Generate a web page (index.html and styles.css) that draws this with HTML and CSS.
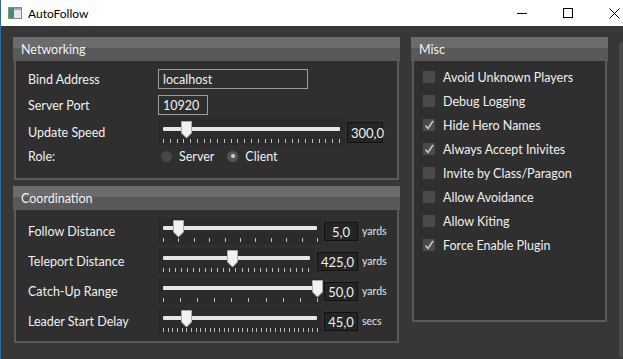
FILE: index.html
```html
<!DOCTYPE html>
<html lang="en">
<head>
    <meta charset="UTF-8">
    <title>AutoFollow</title>
    <link rel="stylesheet" href="styles.css">
</head>
<body>
<div class="window">
    <div class="titlebar">
        <svg class="app-icon" width="14" height="12" viewBox="0 0 14 12">
            <rect x="0.5" y="0.5" width="13" height="11" fill="#e8e8e8" stroke="#8a8a8a"/>
            <rect x="1" y="1" width="5" height="10" fill="#3f8f7a"/>
            <rect x="6" y="1" width="7" height="2" fill="#9aa7b3"/>
        </svg>
        <span class="title">AutoFollow</span>
        <div class="caption-buttons">
            <div class="cap-btn">
                <svg width="10" height="10" viewBox="0 0 10 10"><line x1="0" y1="5.5" x2="10" y2="5.5" stroke="#000" stroke-width="1"/></svg>
            </div>
            <div class="cap-btn">
                <svg width="10" height="10" viewBox="0 0 10 10"><rect x="0.5" y="0.5" width="9" height="9" fill="none" stroke="#000" stroke-width="1"/></svg>
            </div>
            <div class="cap-btn">
                <svg width="11" height="11" viewBox="0 0 11 11"><path d="M0.5 0.5 L10.5 10.5 M10.5 0.5 L0.5 10.5" stroke="#000" stroke-width="1"/></svg>
            </div>
        </div>
    </div>

    <div class="content">
        <div class="left-col">
            <section class="group">
                <div class="group-header">Networking</div>
                <div class="group-body net-body">
                    <div class="row row-input">
                        <label class="label">Bind Address</label>
                        <div class="text-input addr">localhost</div>
                    </div>
                    <div class="row row-input second">
                        <label class="label">Server Port</label>
                        <div class="text-input port">10920</div>
                    </div>
                    <div class="row row-slider">
                        <label class="label">Update Speed</label>
                        <div class="slider">
                            <div class="track"></div>
                            <div class="ticks" style="--step: 6.77px"></div>
                            <svg class="thumb" style="left: 23px" width="11" height="18" viewBox="0 0 11 18"><path d="M0.5 0.5 H10.5 V12 L5.5 17 L0.5 12 Z" fill="#f1f1f1" stroke="#a9a9a9"/></svg>
                        </div>
                        <div class="value big">300,0</div>
                    </div>
                    <div class="row row-role">
                        <label class="label">Role:</label>
                        <div class="radios">
                            <span class="radio"><span class="dot"></span>Server</span>
                            <span class="radio on"><span class="dot"></span>Client</span>
                        </div>
                    </div>
                </div>
            </section>

            <section class="group">
                <div class="group-header">Coordination</div>
                <div class="group-body coord-body">
                    <div class="row coord-row">
                        <label class="label">Follow Distance</label>
                        <div class="slider">
                            <div class="track"></div>
                            <div class="ticks" style="--step: 15.4px"></div>
                            <svg class="thumb" style="left: 15px" width="11" height="18" viewBox="0 0 11 18"><path d="M0.5 0.5 H10.5 V12 L5.5 17 L0.5 12 Z" fill="#f1f1f1" stroke="#a9a9a9"/></svg>
                        </div>
                        <div class="value">5,0</div>
                        <span class="unit">yards</span>
                    </div>
                    <div class="row coord-row">
                        <label class="label">Teleport Distance</label>
                        <div class="slider">
                            <div class="track"></div>
                            <div class="ticks" style="--step: 6.04px"></div>
                            <svg class="thumb" style="left: 69px" width="11" height="18" viewBox="0 0 11 18"><path d="M0.5 0.5 H10.5 V12 L5.5 17 L0.5 12 Z" fill="#f1f1f1" stroke="#a9a9a9"/></svg>
                        </div>
                        <div class="value">425,0</div>
                        <span class="unit">yards</span>
                    </div>
                    <div class="row coord-row">
                        <label class="label">Catch-Up Range</label>
                        <div class="slider">
                            <div class="track"></div>
                            <div class="ticks" style="--step: 17.1px"></div>
                            <svg class="thumb" style="left: 154px" width="11" height="18" viewBox="0 0 11 18"><path d="M0.5 0.5 H10.5 V12 L5.5 17 L0.5 12 Z" fill="#f1f1f1" stroke="#a9a9a9"/></svg>
                        </div>
                        <div class="value">50,0</div>
                        <span class="unit">yards</span>
                    </div>
                    <div class="row coord-row">
                        <label class="label">Leader Start Delay</label>
                        <div class="slider">
                            <div class="track"></div>
                            <div class="ticks" style="--step: 4.67px"></div>
                            <svg class="thumb" style="left: 23px" width="11" height="18" viewBox="0 0 11 18"><path d="M0.5 0.5 H10.5 V12 L5.5 17 L0.5 12 Z" fill="#f1f1f1" stroke="#a9a9a9"/></svg>
                        </div>
                        <div class="value">45,0</div>
                        <span class="unit">secs</span>
                    </div>
                </div>
            </section>
        </div>

        <section class="group misc">
            <div class="group-header">Misc</div>
            <div class="group-body misc-body">
                <div class="check"><span class="box"></span>Avoid Unknown Players</div>
                <div class="check"><span class="box"></span>Debug Logging</div>
                <div class="check"><span class="box"><svg width="12" height="12" viewBox="0 0 12 12"><path d="M2.5 6.5 L5 9.5 L10 2" fill="none" stroke="#c8c8c8" stroke-width="1.6"/></svg></span>Hide Hero Names</div>
                <div class="check"><span class="box"><svg width="12" height="12" viewBox="0 0 12 12"><path d="M2.5 6.5 L5 9.5 L10 2" fill="none" stroke="#c8c8c8" stroke-width="1.6"/></svg></span>Always Accept Inivites</div>
                <div class="check"><span class="box"></span>Invite by Class/Paragon</div>
                <div class="check"><span class="box"></span>Allow Avoidance</div>
                <div class="check"><span class="box"></span>Allow Kiting</div>
                <div class="check"><span class="box"><svg width="12" height="12" viewBox="0 0 12 12"><path d="M2.5 6.5 L5 9.5 L10 2" fill="none" stroke="#c8c8c8" stroke-width="1.6"/></svg></span>Force Enable Plugin</div>
            </div>
        </section>

        <div class="side-strip"></div>
    </div>
</div>
</body>
</html>
```

FILE: styles.css
```css
* {
    margin: 0;
    padding: 0;
    box-sizing: border-box;
}

body {
    width: 623px;
    height: 359px;
    overflow: hidden;
    background: #373737;
    color: #f0f0f0;
    font-family: 'Lato', 'Liberation Sans', sans-serif;
    font-size: 12.5px;
}

.window {
    height: 359px;
    border-left: 1px solid #2b6aa6;
    display: flex;
    flex-direction: column;
}

/* title bar */
.titlebar {
    height: 26px;
    flex: none;
    background: #fff;
    color: #000;
    display: flex;
    align-items: center;
    padding-left: 7px;
    font-size: 12px;
}

.app-icon {
    flex: none;
    margin-right: 6px;
}

.title {
    flex: 1;
}

.caption-buttons {
    display: flex;
    flex: none;
    height: 100%;
    margin-right: -14px;
}

.cap-btn {
    width: 46px;
    display: flex;
    align-items: center;
    justify-content: center;
}

/* main area */
.content {
    flex: 1;
    display: flex;
    align-items: flex-start;
    padding: 11px 0 0 12px;
}

.left-col {
    width: 387px;
    flex: none;
    display: flex;
    flex-direction: column;
    gap: 6px;
}

.group-header {
    height: 24px;
    line-height: 25px;
    padding-left: 8px;
    background: linear-gradient(#6c6c6c 0, #6c6c6c 11px, #595959 11px);
    color: #f2f2f2;
    font-size: 12.5px;
}

.group-body {
    margin: 0 1px;
    border: 2px solid #5a5a5a;
    border-top: none;
    background: #2f2f2f;
}

.row {
    display: flex;
    align-items: center;
}

.label {
    width: 130px;
    flex: none;
    padding-top: 1px;
}

/* networking */
.net-body {
    padding: 8px 14px 13px 12px;
}

.row-input {
    height: 20px;
}

.row-input.second {
    margin-top: 6px;
}

.text-input {
    height: 20px;
    line-height: 19px;
    border: 1px solid #9d9d9d;
    padding-left: 4px;
}

.addr {
    width: 150px;
}

.port {
    width: 50px;
}

.row-slider {
    height: 26px;
    margin-top: 4px;
}

.row-role {
    height: 18px;
    margin-top: 2px;
}

.radios {
    display: flex;
    margin-left: 3px;
    gap: 13px;
}

.radio {
    display: flex;
    align-items: center;
    gap: 7px;
}

.radio .dot {
    width: 11px;
    height: 11px;
    border-radius: 50%;
    background: #474747;
    display: flex;
    align-items: center;
    justify-content: center;
}

.radio.on .dot {
    background: #545454;
}

.radio.on .dot::after {
    content: '';
    width: 4px;
    height: 4px;
    border-radius: 50%;
    background: #d2d2d2;
}

/* sliders */
.slider {
    flex: 1;
    height: 26px;
    position: relative;
    padding: 0 5px;
    background: #2b2b2b;
}

.track {
    height: 4px;
    margin-top: 8px;
    background: #e6e6e6;
    border-radius: 1px;
}

.ticks {
    height: 4px;
    margin-top: 8px;
    width: calc(100% + 1px);
    background: repeating-linear-gradient(to right, #bcbcbc 0, #bcbcbc 1px, transparent 1px, transparent var(--step));
}

.thumb {
    position: absolute;
    top: 2px;
}

.value {
    flex: none;
    min-width: 34px;
    height: 19px;
    line-height: 18px;
    margin-left: 2px;
    padding: 0 3px;
    text-align: center;
    background: #252525;
    border: 1px solid #111;
    font-size: 13px;
}

.value.big {
    width: 36px;
    height: 21px;
    line-height: 20px;
}

/* coordination */
.coord-body {
    padding: 6px 0 5px 12px;
}

.coord-row {
    height: 30px;
}

.unit {
    width: 35px;
    margin-left: 4px;
    font-size: 10.5px;
    color: #e6e6e6;
}

/* misc */
.misc {
    width: 197px;
    flex: none;
    margin-left: 11px;
}

.misc-body {
    height: 261px;
    padding: 4px 0 0 9px;
}

.check {
    height: 24px;
    display: flex;
    align-items: center;
}

.check .box {
    flex: none;
    width: 12px;
    height: 12px;
    background: #4a4a4a;
    margin-right: 8px;
    margin-top: -1px;
    display: flex;
}

.side-strip {
    width: 10px;
    height: 314px;
    margin: 6px 0 0 11px;
    background: #4a4a4a;
    flex: none;
}
```
